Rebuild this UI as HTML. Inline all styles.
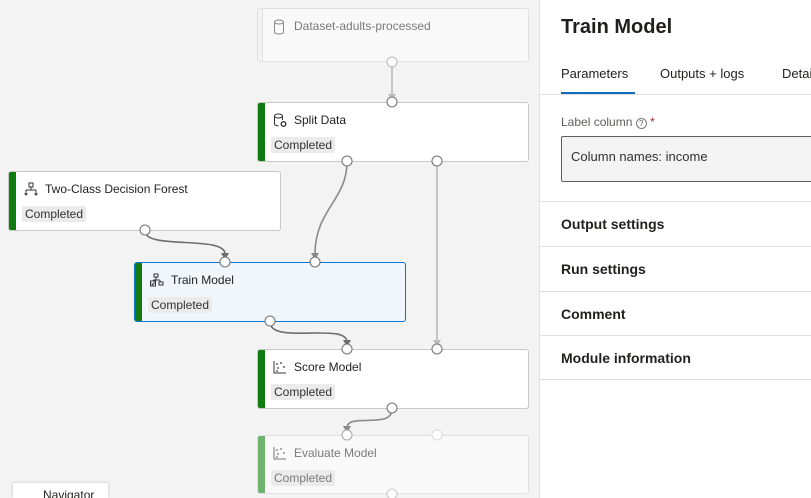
<!DOCTYPE html>
<html style="width:811px;height:498px;overflow:hidden"><head><meta charset="utf-8"><style>
*{margin:0;padding:0;box-sizing:border-box}
body{width:811px;height:498px;overflow:hidden;background:#f3f3f3;font-family:"Liberation Sans",sans-serif;position:relative;color:#201f1e}
.node{position:absolute;background:#fff;border:1px solid #c8c8c8;border-radius:3px;overflow:hidden}
.node .stripe{position:absolute;left:0;top:0;bottom:0;width:7px;background:#107c10}
.node .t{position:absolute;left:36px;top:10px;font-size:12px;white-space:nowrap}
.node .ic{position:absolute;left:15px;top:10px}
.node .b{position:absolute;left:13px;top:34px;background:#ebebeb;border-radius:2px;font-size:12px;padding:1px 3px;color:#323130}
.faded{background:#f9f9f9;border-color:#e0e0e0}
.faded .t,.faded .b{color:#7a7a7a}
.panel{position:absolute;left:539px;top:0;width:272px;height:498px;background:#fff;border-left:1px solid #e1e1e1}
.sec{position:absolute;left:0;width:272px;border-top:1px solid #e1e1e1}
.sec span{position:absolute;left:21px;top:14px;font-size:14px;font-weight:bold;color:#201f1e}
</style></head><body>

<div class="node faded" style="left:257px;top:8px;width:272px;height:54px"><div class="stripe" style="background:#f3f3f3;width:5px;border-right:1px solid #e0e0e0"></div>
<svg class="ic" width="12" height="16" viewBox="0 0 12 16"><ellipse cx="6" cy="3" rx="4.5" ry="2" fill="none" stroke="#888"/><path d="M1.5 3v10c0 1.2 2 2 4.5 2s4.5-.8 4.5-2V3" fill="none" stroke="#888"/></svg>
<div class="t">Dataset-adults-processed</div></div>

<div class="node" style="left:257px;top:102px;width:272px;height:60px"><div class="stripe"></div>
<svg class="ic" width="14" height="15" viewBox="0 0 14 15"><ellipse cx="5.5" cy="3" rx="4" ry="2" fill="none" stroke="#333"/><path d="M1.5 3v8c0 1 1.5 1.7 4 1.8M9.5 3v4" fill="none" stroke="#333"/><circle cx="10.5" cy="11" r="2.3" fill="none" stroke="#333" stroke-width="1.4"/></svg>
<div class="t">Split Data</div><div class="b">Completed</div></div>

<div class="node" style="left:8px;top:171px;width:273px;height:60px"><div class="stripe"></div>
<svg class="ic" width="14" height="14" viewBox="0 0 14 14"><rect x="5" y="1" width="4" height="4" fill="none" stroke="#333"/><path d="M7 5v3M2 8h10M2 8v5M12 8v5M0.5 11.5l1.5 1.5 1.5-1.5M10.5 11.5l1.5 1.5 1.5-1.5" fill="none" stroke="#333"/></svg>
<div class="t">Two-Class Decision Forest</div><div class="b">Completed</div></div>

<div class="node" style="left:134px;top:262px;width:272px;height:60px;background:#f0f6fc;border-color:#0078d4"><div class="stripe"></div>
<svg class="ic" width="14" height="15" viewBox="0 0 14 15"><rect x="4" y="1" width="4" height="3" fill="none" stroke="#333"/><path d="M6 4v3M3 7h7M10 7v2" fill="none" stroke="#333"/><rect x="9" y="9" width="4" height="3" fill="none" stroke="#333"/><rect x="0.5" y="8" width="5" height="5" fill="none" stroke="#333"/><path d="M1.5 10.5l1.2 1.2 2-2.4" fill="none" stroke="#333"/></svg>
<div class="t">Train Model</div><div class="b">Completed</div></div>

<div class="node" style="left:257px;top:349px;width:272px;height:60px"><div class="stripe"></div>
<svg class="ic" width="14" height="14" viewBox="0 0 14 14"><path d="M1 1v12h12" fill="none" stroke="#333"/><circle cx="4" cy="4" r=".9" fill="#333"/><circle cx="8" cy="3" r=".9" fill="#333"/><circle cx="5" cy="8" r=".9" fill="#333"/><circle cx="11" cy="7" r=".9" fill="#333"/><circle cx="4" cy="11" r=".9" fill="#333"/></svg>
<div class="t">Score Model</div><div class="b">Completed</div></div>

<div class="node faded" style="left:257px;top:435px;width:272px;height:59px"><div class="stripe" style="background:#6fb36f"></div>
<svg class="ic" width="14" height="14" viewBox="0 0 14 14"><path d="M1 1v12h12" fill="none" stroke="#777"/><circle cx="4" cy="4" r=".9" fill="#777"/><circle cx="8" cy="3" r=".9" fill="#777"/><circle cx="5" cy="8" r=".9" fill="#777"/><circle cx="11" cy="7" r=".9" fill="#777"/><circle cx="4" cy="11" r=".9" fill="#777"/></svg>
<div class="t">Evaluate Model</div><div class="b">Completed</div></div>

<svg style="position:absolute;left:0;top:0" width="540" height="498">
<g fill="none" stroke-width="1.6">
<path d="M392 62V96" stroke="#bbb"/>
<path d="M347 162C347 200 315 210 315 254" stroke="#8a8a8a"/>
<path d="M437 162V342" stroke="#bbb"/>
<path d="M145 231C145 250 225 235 225 254" stroke="#6e6e6e"/>
<path d="M270 322C270 345 347 322 347 342" stroke="#6e6e6e"/>
<path d="M392 409C392 430 347 412 347 428" stroke="#8a8a8a"/>
</g>
<g stroke="none">
<path d="M388 94h8l-4 7z" fill="#bbb"/>
<path d="M311 253h8l-4 7z" fill="#8a8a8a"/>
<path d="M221 253h8l-4 7z" fill="#6e6e6e"/>
<path d="M433 340h8l-4 7z" fill="#bbb"/>
<path d="M343 340h8l-4 7z" fill="#6e6e6e"/>
<path d="M343 426h8l-4 7z" fill="#8a8a8a"/>
</g>
<g fill="#fff" stroke="#777" stroke-width="1.1">
<circle cx="392" cy="62" r="5" stroke="#bbb"/>
<circle cx="392" cy="102" r="5"/>
<circle cx="347" cy="161" r="5"/><circle cx="437" cy="161" r="5"/>
<circle cx="145" cy="230" r="5"/>
<circle cx="225" cy="262" r="5"/><circle cx="315" cy="262" r="5"/>
<circle cx="270" cy="321" r="5"/>
<circle cx="347" cy="349" r="5"/><circle cx="437" cy="349" r="5"/>
<circle cx="392" cy="408" r="5"/>
<circle cx="347" cy="435" r="5" stroke="#aaa"/><circle cx="437" cy="435" r="5" stroke="#ddd"/>
<circle cx="392" cy="494" r="5" stroke="#ccc"/>
</g>
</svg>

<div style="position:absolute;left:13px;top:483px;width:95px;height:15px;overflow:hidden;background:#fff;box-shadow:0 0 3px rgba(0,0,0,.2);font-size:12px;padding:5px 0 0 30px;line-height:14px">Navigator</div>

<div class="panel">
<div style="position:absolute;left:21px;top:16px;font-size:20px;font-weight:bold;color:#201f1e">Train Model</div>
<div style="position:absolute;left:21px;top:66px;font-size:13px">Parameters</div>
<div style="position:absolute;left:120px;top:66px;font-size:13px">Outputs + logs</div>
<div style="position:absolute;left:242px;top:66px;font-size:13px">Details</div>
<div style="position:absolute;left:21px;top:92px;width:74px;height:2px;background:#0f6cbd"></div>
<div style="position:absolute;left:0;top:94px;width:272px;height:1px;background:#e1e1e1"></div>
<div style="position:absolute;left:21px;top:115px;font-size:12px;color:#605e5c">Label column <span style="display:inline-block;width:11px;height:11px;border:1px solid #777;border-radius:50%;font-size:8px;text-align:center;line-height:9px">?</span> <span style="color:#a4262c">*</span></div>
<div style="position:absolute;left:21px;top:136px;width:260px;height:46px;background:#f3f3f3;border:1px solid #605e5c;border-radius:2px;font-size:13px;padding:12px 0 0 9px;color:#323130">Column names: income</div>
<div class="sec" style="top:201px;height:45px"><span>Output settings</span></div>
<div class="sec" style="top:246px;height:45px"><span>Run settings</span></div>
<div class="sec" style="top:291px;height:44px"><span>Comment</span></div>
<div class="sec" style="top:335px;height:45px;border-bottom:1px solid #e1e1e1"><span>Module information</span></div>
</div>
</body></html>
